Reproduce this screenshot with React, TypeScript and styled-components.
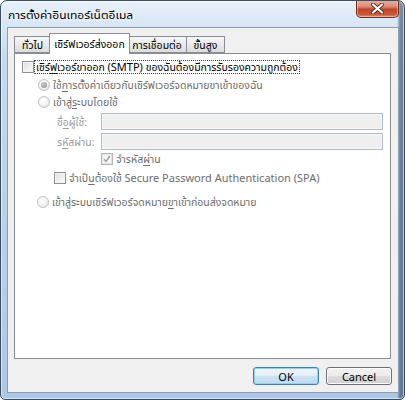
import React from "react";
import styled, { createGlobalStyle } from "styled-components";

const Global = createGlobalStyle`
  html, body { margin: 0; padding: 0; background: #ffffff; }
  body {
    width: 405px; height: 400px; overflow: hidden;
    font-family: "Noto Sans", "Noto Sans Thai UI", sans-serif;
  }
  * { box-sizing: border-box; }
`;

const Window = styled.div`
  width: 405px;
  height: 400px;
  display: flex;
  flex-direction: column;
  border: 1px solid #3a4c62;
  border-radius: 7px 7px 5px 5px;
  background:
    linear-gradient(90deg, rgba(255,255,255,0) 0, rgba(255,255,255,0) 396px, rgba(40,60,85,0.55) 399px),
    linear-gradient(180deg, #e9f1fa 0px, #dae7f5 20px, #c6d9ef 60px, #b8cfe9 250px, #adc6e4 100%);
  box-shadow: inset 0 0 0 1px rgba(255, 255, 255, 0.55);
  overflow: hidden;
`;

const TitleBar = styled.div`
  height: 26px;
  flex: none;
  display: flex;
  justify-content: space-between;
  align-items: flex-start;
  padding: 0 5px 0 7px;
`;

const Title = styled.div`
  font-size: 12px;
  line-height: 27px;
  color: #000;
  text-shadow: 0 0 6px rgba(255, 255, 255, 0.95), 0 0 3px #fff;
  white-space: nowrap;
`;

const CloseButton = styled.div`
  width: 43px;
  height: 18px;
  margin-top: -1px;
  display: flex;
  align-items: center;
  justify-content: center;
  border: 1px solid #6d2a1e;
  border-top: none;
  border-radius: 0 0 5px 5px;
  background: linear-gradient(180deg, #eab3a2 0%, #d98a73 40%, #c2432a 55%, #c85a3d 85%, #e0906f 100%);
  box-shadow: inset 0 0 0 1px rgba(255, 220, 200, 0.5);
`;

const Client = styled.div`
  flex: 1;
  margin: 0 5px 6px 6px;
  border: 1px solid #8a9db3;
  background: #f0f0f0;
  padding: 5px 6px 6px 6px;
  display: flex;
  flex-direction: column;
`;

const TabStrip = styled.div`
  height: 20px;
  display: flex;
  align-items: flex-end;
  position: relative;
  z-index: 2;
`;

const Tab = styled.div<{ $active?: boolean; $w: number }>`
  width: ${(p) => p.$w}px;
  height: ${(p) => (p.$active ? "21px" : "17px")};
  margin: ${(p) => (p.$active ? "0 -2px -1px -2px" : "0")};
  display: flex;
  align-items: center;
  justify-content: center;
  font-size: 10.5px;
  color: #000;
  white-space: nowrap;
  border: 1px solid #898c95;
  border-bottom: ${(p) => (p.$active ? "none" : "1px solid #898c95")};
  margin-left: ${(p) => (p.$active ? "-2px" : "-1px")};
  background: ${(p) =>
    p.$active ? "#ffffff" : "linear-gradient(180deg, #f6f6f6 0%, #eaeaea 50%, #dcdcdc 100%)"};
  position: relative;
  z-index: ${(p) => (p.$active ? 2 : 1)};
  &:first-child { margin-left: 0; }
`;

const Panel = styled.div`
  width: 377px;
  height: 306px;
  border: 1px solid #898c95;
  background: #ffffff;
  display: flex;
  flex-direction: column;
  padding-left: 7px;
  position: relative;
  z-index: 1;
`;

const Row = styled.div<{ $mt: number; $indent: number; $h?: number }>`
  display: flex;
  align-items: center;
  height: ${(p) => p.$h ?? 14}px;
  margin-top: ${(p) => p.$mt}px;
  padding-left: ${(p) => p.$indent}px;
  white-space: nowrap;
`;

const Box = styled.span<{ $disabled?: boolean }>`
  width: 12px;
  height: 12px;
  flex: none;
  display: inline-flex;
  align-items: center;
  justify-content: center;
  border: 1px solid ${(p) => (p.$disabled ? "#b4b4b4" : "#8e8f8f")};
  background: ${(p) =>
    p.$disabled
      ? "#f4f4f4"
      : "linear-gradient(135deg, #dcdcdc 0%, #eeeeee 50%, #fbfbfb 100%)"};
  box-shadow: inset 0 0 0 1px ${(p) => (p.$disabled ? "#e6e6e6" : "#f4f4f4")};
`;

const Radio = styled.span<{ $checked?: boolean }>`
  width: 12px;
  height: 12px;
  flex: none;
  border-radius: 50%;
  display: inline-flex;
  align-items: center;
  justify-content: center;
  border: 1px solid #c2c2c2;
  background: radial-gradient(circle at 40% 35%, #ffffff 0%, #f0f0f0 60%, #dedede 100%);
  &::after {
    content: "";
    display: ${(p) => (p.$checked ? "block" : "none")};
    width: 6px;
    height: 6px;
    border-radius: 50%;
    background: radial-gradient(circle at 40% 35%, #d0d0d0 0%, #9a9a9a 70%, #8a8a8a 100%);
  }
`;

const Text = styled.span<{ $tone: "normal" | "dim" | "faint"; $gap: number }>`
  font-size: 10.5px;
  line-height: 14px;
  margin-left: ${(p) => p.$gap}px;
  color: ${(p) => (p.$tone === "normal" ? "#000" : p.$tone === "dim" ? "#6d6d6d" : "#9b9b9b")};
`;

const Latin = styled.span`
  font-size: 11px;
`;

const FocusText = styled.span`
  font-size: 10.5px;
  line-height: 12px;
  margin-left: 1px;
  padding: 0 1px 0 1px;
  color: #000;
  outline: 1px dotted #3c3c3c;
  outline-offset: 0;
`;

const Acc = styled.u`
  text-decoration-thickness: 1px;
  text-underline-offset: 2px;
`;

const FieldLabel = styled.span`
  width: 44px;
  flex: none;
  font-size: 10.5px;
  color: #9b9b9b;
`;

const Field = styled.div`
  width: 282px;
  height: 17px;
  border: 1px solid #aebccc;
  background: #efefef;
  box-shadow: inset 0 0 0 1px #f7f7f7;
`;

const ButtonRow = styled.div`
  display: flex;
  justify-content: flex-end;
  gap: 7px;
  margin-top: 8px;
`;

const Button = styled.div<{ $default?: boolean }>`
  width: 66px;
  height: 18px;
  display: flex;
  align-items: center;
  justify-content: center;
  font-size: 11px;
  color: #000;
  border-radius: 3px;
  border: 1px solid ${(p) => (p.$default ? "#3c7fb1" : "#707070")};
  background: ${(p) =>
    p.$default
      ? "linear-gradient(180deg, #eef6fc 0%, #e2eef8 50%, #cde2f2 51%, #c2dbee 100%)"
      : "linear-gradient(180deg, #f2f2f2 0%, #ebebeb 50%, #dddddd 51%, #cfcfcf 100%)"};
  box-shadow: inset 0 0 0 1px ${(p) => (p.$default ? "#94d0ee" : "#fcfcfc")};
`;

const CloseGlyph = () => (
  <svg width="13" height="11" viewBox="0 0 13 11">
    <path d="M2 1.5 L11 9.5 M11 1.5 L2 9.5" stroke="#5a2a20" strokeWidth="4" strokeLinecap="round" />
    <path d="M2 1.5 L11 9.5 M11 1.5 L2 9.5" stroke="#ffffff" strokeWidth="2.2" strokeLinecap="round" />
  </svg>
);

const Check = () => (
  <svg width="8" height="8" viewBox="0 0 8 8">
    <path d="M1 4.2 L3 6.5 L7 1" stroke="#a0a0a0" strokeWidth="1.3" fill="none" />
  </svg>
);

export default function App() {
  return (
    <>
      <Global />
      <Window>
        <TitleBar>
          <Title>การตั้งค่าอินเทอร์เน็ตอีเมล</Title>
          <CloseButton>
            <CloseGlyph />
          </CloseButton>
        </TitleBar>
        <Client>
          <TabStrip>
            <Tab $w={37}>ทั่วไป</Tab>
            <Tab $w={81} $active>เซิร์ฟเวอร์ส่งออก</Tab>
            <Tab $w={60}>การเชื่อมต่อ</Tab>
            <Tab $w={39}>ขั้นสูง</Tab>
          </TabStrip>
          <Panel>
            <Row $mt={6} $indent={0}>
              <Box />
              <FocusText>
                เซิร์<Acc>ฟ</Acc>เวอร์ขาออก <Latin>(SMTP)</Latin> ของฉันต้องมีการรับรองความถูกต้อง
              </FocusText>
            </Row>
            <Row $mt={4} $indent={16}>
              <Radio $checked />
              <Text $tone="dim" $gap={3}>
                ใช้<Acc>ก</Acc>ารตั้งค่าเดียวกับเซิร์ฟเวอร์จดหมายขาเข้าของฉัน
              </Text>
            </Row>
            <Row $mt={3} $indent={16}>
              <Radio />
              <Text $tone="dim" $gap={3}>
                เข้าสู่<Acc>ร</Acc>ะบบโดยใช้
              </Text>
            </Row>
            <Row $mt={4} $indent={35} $h={17}>
              <FieldLabel>
                ชื่<Acc>อ</Acc>ผู้ใช้:
              </FieldLabel>
              <Field />
            </Row>
            <Row $mt={3} $indent={35} $h={17}>
              <FieldLabel>
                ร<Acc>หั</Acc>สผ่าน:
              </FieldLabel>
              <Field />
            </Row>
            <Row $mt={2} $indent={79}>
              <Box $disabled>
                <Check />
              </Box>
              <Text $tone="dim" $gap={3}>
                จำรหัส<Acc>ผ่</Acc>าน
              </Text>
            </Row>
            <Row $mt={5} $indent={32}>
              <Box />
              <Text $tone="dim" $gap={3}>
                จำเป็<Acc>น</Acc>ต้องใช้ <Latin>Secure Password Authentication (SPA)</Latin>
              </Text>
            </Row>
            <Row $mt={10} $indent={15}>
              <Radio />
              <Text $tone="dim" $gap={3}>
                เข้าสู่ระบบเซิร์ฟเวอร์จดหมาย<Acc>ข</Acc>าเข้าก่อนส่งจดหมาย
              </Text>
            </Row>
          </Panel>
          <ButtonRow>
            <Button $default>OK</Button>
            <Button>Cancel</Button>
          </ButtonRow>
        </Client>
      </Window>
    </>
  );
}
